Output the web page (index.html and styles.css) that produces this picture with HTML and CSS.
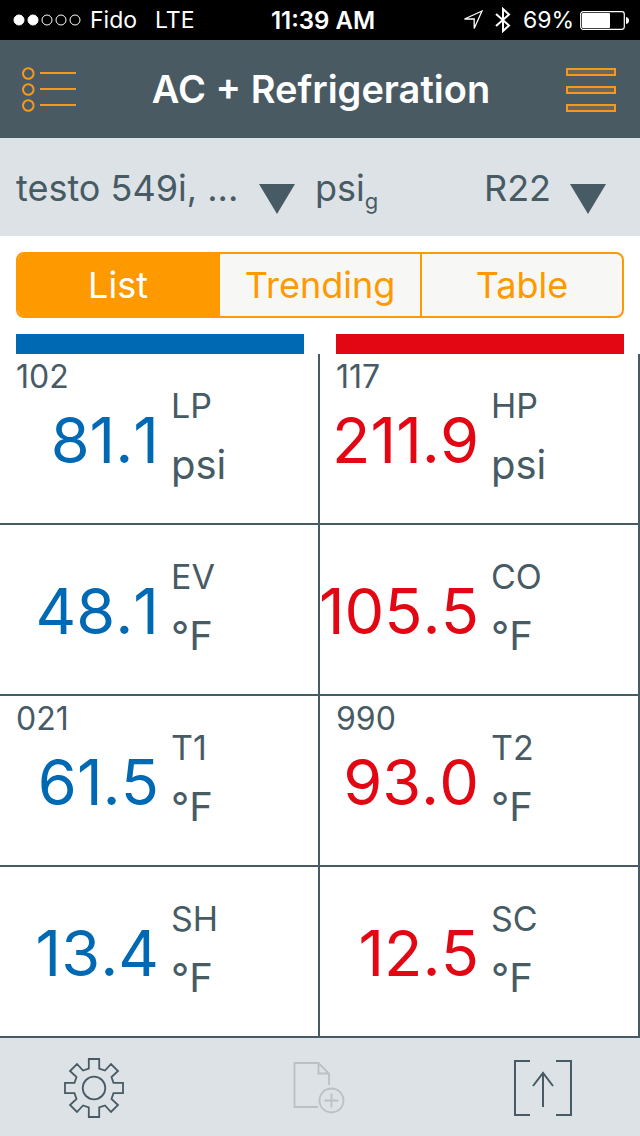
FILE: index.html
```html
<!DOCTYPE html>
<html lang="en">
<head>
    <meta charset="UTF-8">
    <meta name="viewport" content="width=device-width, initial-scale=1.0">
    <title>AC + Refrigeration</title>
    <link rel="stylesheet" href="styles.css">
</head>
<body>
<div class="status-bar">
    <div class="status-left">
        <svg class="signal" width="68" height="12" viewBox="0 0 68 12" fill="none" stroke="#fff">
            <circle cx="6" cy="6" r="5" fill="#fff"/>
            <circle cx="20" cy="6" r="5" fill="#fff"/>
            <circle cx="34" cy="6" r="5"/>
            <circle cx="48" cy="6" r="5"/>
            <circle cx="62" cy="6" r="5"/>
        </svg>
        <span class="carrier">Fido</span>
        <span>LTE</span>
    </div>
    <div class="clock">11:39 AM</div>
    <div class="status-right">
        <svg width="20" height="20" viewBox="0 0 20 20" fill="none" stroke="#fff" stroke-width="1.3">
            <path d="M19 1L1.5 9H11.2V18.5Z"/>
        </svg>
        <svg width="16" height="26" viewBox="0 0 16 26" fill="none" stroke="#fff" stroke-width="2">
            <path d="M1 7L14 18.5L8 24V2L14 7.5L1 19"/>
        </svg>
        <span class="battery-text">69%</span>
        <svg width="49" height="19" viewBox="0 0 49 19">
            <rect x="0.7" y="0.7" width="43.6" height="17.6" rx="2.5" fill="none" stroke="#fff" stroke-width="1.2"/>
            <rect x="2" y="2" width="28" height="15" rx="1" fill="#fff"/>
            <path d="M46 6Q49 6.5 49 9.5T46 13Z" fill="#fff"/>
        </svg>
    </div>
</div>

<header class="header">
    <button class="icon-button" aria-label="Applications">
        <svg width="54" height="46" viewBox="0 0 54 46" fill="none" stroke="#f7981d" stroke-width="2">
            <circle cx="6.3" cy="6.5" r="5.3"/>
            <circle cx="6.3" cy="22.5" r="5.3"/>
            <circle cx="6.3" cy="38.5" r="5.3"/>
            <path d="M18 6H54M18 22H54M18 38H54"/>
        </svg>
    </button>
    <h1>AC + Refrigeration</h1>
    <button class="icon-button" aria-label="Menu">
        <svg width="50" height="44" viewBox="0 0 50 44" fill="#6b675a" stroke="#f7981d" stroke-width="2">
            <rect x="1" y="1" width="48" height="6"/>
            <rect x="1" y="19" width="48" height="6"/>
            <rect x="1" y="37" width="48" height="6"/>
        </svg>
    </button>
</header>

<div class="selection">
    <label class="picker picker-device">
        <select aria-label="Probe">
            <option>testo 549i, ...</option>
        </select>
        <svg class="arrow" width="36" height="30" viewBox="0 0 36 30"><path d="M0 0H36L18 30Z" fill="#475b65"/></svg>
    </label>
    <div class="pressure-unit">psi<sub>g</sub></div>
    <label class="picker picker-refrigerant">
        <select aria-label="Refrigerant">
            <option>R22</option>
        </select>
        <svg class="arrow" width="36" height="30" viewBox="0 0 36 30"><path d="M0 0H36L18 30Z" fill="#475b65"/></svg>
    </label>
</div>

<nav class="tabs">
    <button class="tab active">List</button>
    <button class="tab">Trending</button>
    <button class="tab">Table</button>
</nav>

<div class="bars">
    <div class="bar low"></div>
    <div class="bar high"></div>
</div>

<main class="readings">
    <div class="cell low">
        <div class="probe">102</div>
        <div class="reading">
            <div class="value">81.1</div>
            <div class="labels"><div class="name">LP</div><div class="unit">psi</div></div>
        </div>
    </div>
    <div class="cell high">
        <div class="probe">117</div>
        <div class="reading">
            <div class="value">211.9</div>
            <div class="labels"><div class="name">HP</div><div class="unit">psi</div></div>
        </div>
    </div>
    <div class="cell low">
        <div class="probe"></div>
        <div class="reading">
            <div class="value">48.1</div>
            <div class="labels"><div class="name">EV</div><div class="unit">°F</div></div>
        </div>
    </div>
    <div class="cell high">
        <div class="probe"></div>
        <div class="reading">
            <div class="value">105.5</div>
            <div class="labels"><div class="name">CO</div><div class="unit">°F</div></div>
        </div>
    </div>
    <div class="cell low">
        <div class="probe">021</div>
        <div class="reading">
            <div class="value">61.5</div>
            <div class="labels"><div class="name">T1</div><div class="unit">°F</div></div>
        </div>
    </div>
    <div class="cell high">
        <div class="probe">990</div>
        <div class="reading">
            <div class="value">93.0</div>
            <div class="labels"><div class="name">T2</div><div class="unit">°F</div></div>
        </div>
    </div>
    <div class="cell low">
        <div class="probe"></div>
        <div class="reading">
            <div class="value">13.4</div>
            <div class="labels"><div class="name">SH</div><div class="unit">°F</div></div>
        </div>
    </div>
    <div class="cell high">
        <div class="probe"></div>
        <div class="reading">
            <div class="value">12.5</div>
            <div class="labels"><div class="name">SC</div><div class="unit">°F</div></div>
        </div>
    </div>
</main>

<footer class="toolbar">
    <button class="icon-button" aria-label="Settings">
        <svg width="60" height="60" viewBox="-30 -30 60 60" fill="none" stroke="#475b65" stroke-width="1.8">
            <path d="M-5.2 -29H5.2V-19.5L11 -17.5L17 -24L24 -17L17.5 -11L19.5 -5.2H29V5.2H19.5L17.5 11L24 17L17 24L11 17.5L5.2 19.5V29H-5.2V19.5L-11 17.5L-17 24L-24 17L-17.5 11L-19.5 5.2H-29V-5.2H-19.5L-17.5 -11L-24 -17L-17 -24L-11 -17.5L-5.2 -19.5Z"/>
            <circle r="11.3"/>
        </svg>
    </button>
    <button class="icon-button" aria-label="New report" disabled>
        <svg width="52" height="52" viewBox="0 0 52 52" fill="none" stroke="#b9c1c5" stroke-width="1.8">
            <path d="M25 45H1.5V1H25.5L36 11.5V23M25.5 1V11.5H36"/>
            <circle cx="38.5" cy="38.5" r="12"/>
            <path d="M38.5 31.5V45.5M31.5 38.5H45.5"/>
        </svg>
    </button>
    <button class="icon-button" aria-label="Export">
        <svg width="60" height="56" viewBox="0 0 60 56" fill="none" stroke="#475b65" stroke-width="2">
            <path d="M16 1H1V55H16M42 1H57V55H42M29 47V13M19 26L29 13L39 26"/>
        </svg>
    </button>
</footer>
</body>
</html>
```

FILE: styles.css
```css
* {
  box-sizing: border-box;
}

body {
  margin: 0;
  min-height: 100vh;
  display: flex;
  flex-direction: column;
  font-family: Inter, "Liberation Sans", sans-serif;
  color: #475b65;
  background: #fff;
}

svg {
  display: block;
  flex: none;
}

button,
select {
  font-family: inherit;
  color: inherit;
  margin: 0;
  padding: 0;
  border: none;
  background: none;
}

.icon-button {
  cursor: pointer;
}

/* status bar */
.status-bar {
  display: grid;
  grid-template-columns: 1fr auto 1fr;
  align-items: center;
  height: 40px;
  padding: 0 11px 0 13px;
  background: #000;
  color: #fff;
  font-size: 23px;
}

.status-left,
.status-right {
  display: flex;
  align-items: center;
}

.status-right {
  justify-content: flex-end;
}

.carrier {
  margin: 0 18px 0 9px;
}

.clock {
  padding-left: 4px;
  font-size: 24px;
  font-weight: 600;
  font-kerning: none;
}

.battery-text {
  margin: 0 6px 0 12px;
}

.status-right svg + svg {
  margin-left: 12px;
}

/* title */
.header {
  display: flex;
  justify-content: space-between;
  align-items: center;
  height: 98px;
  padding: 0 24px 0 22px;
  background: #495a63;
}

.header .icon-button {
  padding-top: 2px;
}

.header h1 {
  margin: 0;
  font-size: 38px;
  line-height: 48px;
  font-weight: 600;
  color: #fff;
}

/* probe and refrigerant selection */
.selection {
  display: flex;
  align-items: center;
  height: 98px;
  padding: 2px 34px 0 16px;
  background: #dde2e6;
  font-size: 36px;
}

.picker {
  display: flex;
  align-items: center;
  gap: 20px;
}

.picker select {
  appearance: none;
  font-size: 36px;
  line-height: 48px;
  cursor: pointer;
}

.picker-refrigerant {
  gap: 18px;
  margin-left: auto;
}

.arrow {
  margin-top: 22px;
  pointer-events: none;
}

.pressure-unit {
  margin-left: 20px;
  line-height: 48px;
}

.pressure-unit sub {
  font-size: 22px;
  line-height: 1;
}

/* view tabs */
.tabs {
  display: flex;
  height: 66px;
  margin: 16px;
  border: 2px solid #ff9900;
  border-radius: 8px;
  background: #f7f7f5;
  overflow: hidden;
}

.tab {
  flex: 1;
  font-size: 36px;
  color: #ff9900;
  cursor: pointer;
}

.tab + .tab {
  border-left: 2px solid #ff9900;
}

.tab.active {
  background: #ff9900;
  color: #fff;
}

/* readings */
.bars {
  display: grid;
  grid-template-columns: 1fr 1fr;
  gap: 32px;
  padding: 0 16px;
}

.bar {
  height: 20px;
}

.bar.low {
  background: #0069b4;
}

.bar.high {
  background: #e30613;
}

.readings {
  flex: 1;
  display: grid;
  grid-template-columns: 1fr 1fr;
  grid-auto-rows: 1fr;
}

.cell {
  padding-top: 7px;
  border-right: 2px solid #475b65;
  border-bottom: 2px solid #475b65;
}

.probe {
  height: 30px;
  padding-left: 16px;
  font-size: 32px;
  line-height: 32px;
}

.reading {
  display: flex;
}

.value {
  width: 50%;
  display: flex;
  justify-content: flex-end;
  font-size: 63px;
  line-height: 98px;
  font-kerning: none;
}

.cell.low .value {
  color: #0069b4;
}

.cell.high .value {
  color: #e30613;
}

.labels {
  padding-left: 12px;
}

.name {
  font-size: 34px;
  line-height: 30px;
}

.unit {
  margin-top: 20px;
  font-size: 40px;
  line-height: 48px;
}

/* bottom toolbar */
.toolbar {
  display: flex;
  justify-content: space-between;
  align-items: center;
  height: 98px;
  padding: 2px 66px 0 64px;
  background: #dde2e6;
}
```
